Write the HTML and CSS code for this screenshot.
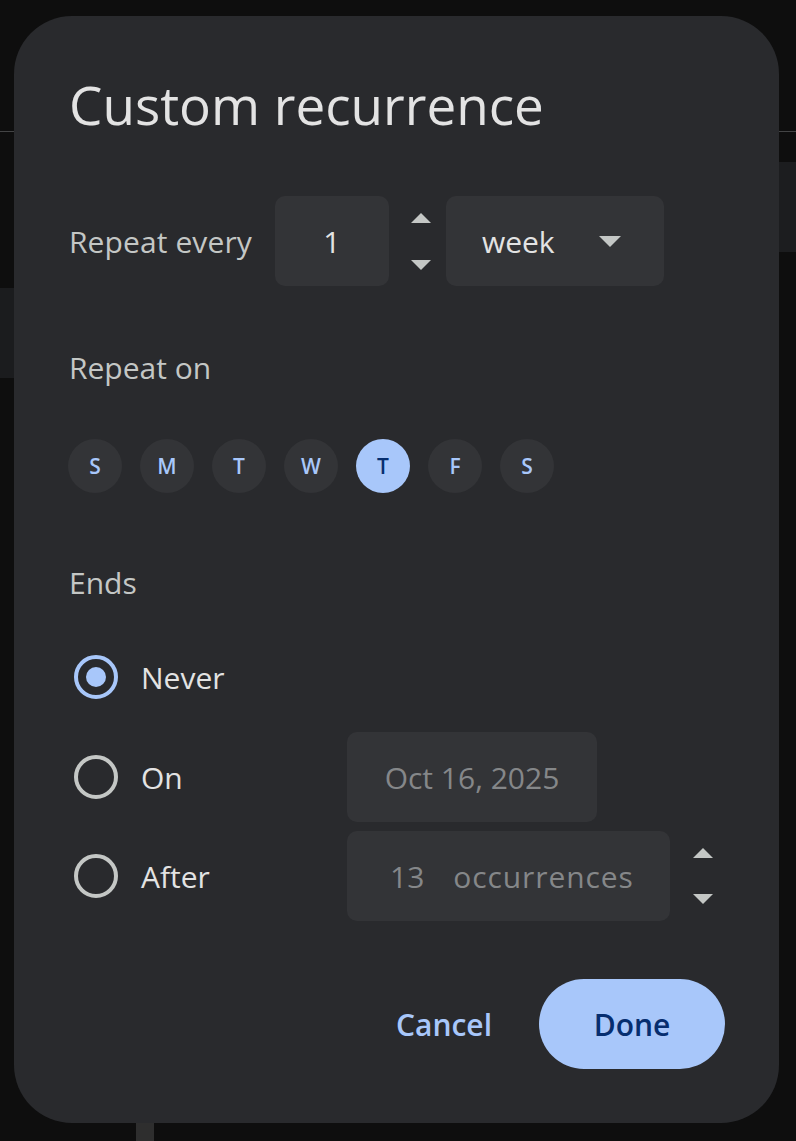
FILE: index.html
```html
<!DOCTYPE html>
<html lang="en">
<head>
<meta charset="utf-8">
<title>Custom recurrence</title>
<link rel="stylesheet" href="styles.css">
</head>
<body>
<div class="backdrop">
  <div class="bd-header"></div>
  <div class="bd-strip-right"></div>
  <div class="bd-strip-left"></div>
  <div class="bd-bar"></div>
</div>

<div class="dialog" role="dialog" aria-labelledby="dlg-title">
  <h1 class="title" id="dlg-title">Custom recurrence</h1>

  <div class="repeat-row">
    <span class="label">Repeat every</span>
    <div class="field num-field">1</div>
    <div class="spinner">
      <svg class="tri" viewBox="0 0 20 10" width="20" height="10"><polygon points="10,0 20,10 0,10"/></svg>
      <svg class="tri" viewBox="0 0 20 10" width="20" height="10"><polygon points="0,0 20,0 10,10"/></svg>
    </div>
    <div class="field select-field">
      <span>week</span>
      <svg class="tri" viewBox="0 0 22 11" width="22" height="11"><polygon points="0,0 22,0 11,11"/></svg>
    </div>
  </div>

  <div class="section-label repeat-on">Repeat on</div>
  <div class="days">
    <span class="day">S</span>
    <span class="day">M</span>
    <span class="day">T</span>
    <span class="day">W</span>
    <span class="day day-on">T</span>
    <span class="day">F</span>
    <span class="day">S</span>
  </div>

  <div class="section-label ends">Ends</div>

  <div class="ends-grid">
    <div class="opt opt-never">
      <svg class="radio radio-on" viewBox="0 0 44 44" width="44" height="44"><circle cx="22" cy="22" r="20"/><circle class="dot" cx="22" cy="22" r="10"/></svg>
      <span class="opt-label">Never</span>
    </div>
    <div></div>

    <div class="opt">
      <svg class="radio" viewBox="0 0 44 44" width="44" height="44"><circle cx="22" cy="22" r="20"/></svg>
      <span class="opt-label">On</span>
    </div>
    <div class="field date-field">Oct 16, 2025</div>

    <div class="opt">
      <svg class="radio" viewBox="0 0 44 44" width="44" height="44"><circle cx="22" cy="22" r="20"/></svg>
      <span class="opt-label">After</span>
    </div>
    <div class="after-cell">
      <div class="field occ-field"><span class="occ-num">13</span><span class="occ-word">occurrences</span></div>
      <div class="spinner spinner-after">
        <svg class="tri" viewBox="0 0 20 10" width="20" height="10"><polygon points="10,0 20,10 0,10"/></svg>
        <svg class="tri" viewBox="0 0 20 10" width="20" height="10"><polygon points="0,0 20,0 10,10"/></svg>
      </div>
    </div>
  </div>

  <div class="actions">
    <button class="btn btn-text">Cancel</button>
    <button class="btn btn-filled">Done</button>
  </div>
</div>
</body>
</html>
```

FILE: styles.css
```css
html, body {
  margin: 0;
  padding: 0;
}
body {
  background: #0e0e0e;
  width: 796px;
  height: 1141px;
  overflow: hidden;
  position: relative;
  font-family: "Open Sans", "Noto Sans", sans-serif;
}

/* backdrop (page behind the modal) */
.backdrop {
  display: flex;
  flex-direction: column;
}
.bd-header {
  height: 131px;
  border-bottom: 1px solid #434445;
}
.bd-strip-right {
  margin-top: 30px;
  height: 90px;
  margin-left: 779px;
  background: #1c1d1f;
}
.bd-strip-left {
  margin-top: 36px;
  height: 90px;
  width: 14px;
  background: #1b1c1e;
}
.bd-bar {
  margin-top: 745px;
  margin-left: 136px;
  width: 18px;
  height: 40px;
  background: #2e2e2e;
}

/* dialog */
.dialog {
  position: absolute;
  left: 14px;
  top: 16px;
  width: 765px;
  box-sizing: border-box;
  padding: 57px 54px 54px 55px;
  background: #292a2d;
  border-radius: 58px;
  color: #e3e3e3;
}
.title {
  margin: 0;
  font-size: 53px;
  line-height: 64px;
  font-weight: 400;
  color: #e3e3e3;
}

.repeat-row {
  margin-top: 59px;
  display: flex;
  align-items: center;
  height: 90px;
}
.label {
  font-size: 30px;
  color: #c4c7c5;
  margin-right: 23px;
  letter-spacing: 0.1px;
}
.field {
  background: #333437;
  border-radius: 10px;
  height: 90px;
  box-sizing: border-box;
  display: flex;
  align-items: center;
  font-size: 30px;
}
.num-field {
  width: 114px;
  justify-content: center;
  color: #e3e3e3;
}
.spinner {
  display: flex;
  flex-direction: column;
  justify-content: space-between;
  height: 57px;
  margin: 0 15px 0 22px;
}
.tri {
  display: block;
  fill: #c4c7c5;
}
.select-field {
  width: 218px;
  padding: 0 43px 0 36px;
  justify-content: space-between;
  color: #e3e3e3;
}

.section-label {
  font-size: 30px;
  line-height: 40px;
  color: #c4c7c5;
}
.repeat-on { margin-top: 62px; }
.ends { margin-top: 70px; }

.days {
  margin-top: 51px;
  display: flex;
  gap: 18px;
  margin-left: -1px;
}
.day {
  width: 54px;
  height: 54px;
  border-radius: 50%;
  background: #333437;
  color: #a8c7fa;
  display: flex;
  align-items: center;
  justify-content: center;
  font-size: 21px;
  font-weight: 600;
}
.day-on {
  background: #a8c7fa;
  color: #062e6f;
}

.ends-grid {
  margin-top: 52px;
  display: grid;
  grid-template-columns: 278px auto;
  grid-template-rows: 68px 90px 90px;
  row-gap: 9px;
  justify-content: start;
}
.opt {
  display: flex;
  align-items: center;
  padding-left: 5px;
}
.opt-never {
  align-self: start;
  height: 44px;
}
.radio {
  display: block;
  fill: none;
}
.radio circle { stroke: #c4c7c5; stroke-width: 4; }
.radio-on circle { stroke: #a8c7fa; }
.radio-on .dot { fill: #a8c7fa; stroke: none; }
.opt-label {
  margin-left: 23px;
  font-size: 30px;
  color: #e3e3e3;
}
.date-field {
  width: 250px;
  justify-content: center;
  color: #858789;
}
.after-cell {
  display: flex;
  align-items: center;
}
.occ-field {
  width: 323px;
  padding-left: 43px;
  color: #858789;
}
.occ-num { margin-right: 29px; }
.occ-word { letter-spacing: 0.9px; }
.spinner-after {
  height: 56px;
  margin: 0 0 0 23px;
}

.actions {
  margin-top: 58px;
  display: flex;
  justify-content: flex-end;
  align-items: center;
  gap: 23px;
}
.btn {
  border: none;
  font-family: inherit;
  font-size: 30px;
  font-weight: 600;
  height: 90px;
  border-radius: 45px;
  cursor: pointer;
}
.btn-text {
  background: transparent;
  color: #a8c7fa;
  padding: 0 24px;
}
.btn-filled {
  background: #a8c7fa;
  color: #062e6f;
  width: 186px;
  padding: 0;
}
```
